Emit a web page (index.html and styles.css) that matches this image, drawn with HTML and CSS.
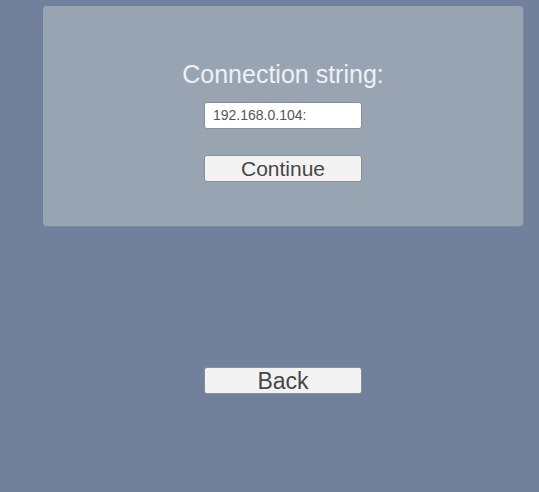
FILE: index.html
```html
<!DOCTYPE html>
<html>
<head>
<meta charset="utf-8">
<link rel="stylesheet" href="styles.css">
</head>
<body>
<div class="screen">
  <div class="panel">
    <div class="title">Connection string:</div>
    <div class="field">192.168.0.104:</div>
    <div class="btn">Continue</div>
  </div>
  <div class="back-row">
    <div class="btn btn-back">Back</div>
  </div>
</div>
</body>
</html>
```
FILE: styles.css
```css
html, body {
  margin: 0;
  padding: 0;
  background: #71819c;
  width: 539px;
  height: 492px;
  overflow: hidden;
  font-family: "Liberation Sans", Arial, sans-serif;
}
.screen {
  padding: 6px 0 0 43px;
}
.panel {
  box-sizing: border-box;
  width: 480px;
  height: 220px;
  background: #99a4b3;
  border-radius: 4px;
  box-shadow: 1px 1px 0 #7d8aa0;
  display: flex;
  flex-direction: column;
  align-items: center;
  padding-top: 55px;
}
.title {
  color: #eef0f3;
  font-size: 25px;
  line-height: 26px;
  height: 26px;
}
.field {
  box-sizing: border-box;
  margin-top: 15px;
  width: 158px;
  height: 27px;
  background: #ffffff;
  border: 1px solid #8a8f96;
  border-radius: 3px;
  color: #555555;
  font-size: 14px;
  line-height: 25px;
  padding-left: 8px;
}
.btn {
  box-sizing: border-box;
  width: 158px;
  height: 27px;
  background: #f3f3f3;
  border: 1px solid #8a8f96;
  border-radius: 3px;
  color: #474747;
  font-size: 21px;
  line-height: 26px;
  text-align: center;
}
.btn-back {
  font-size: 23px;
}
.panel .btn {
  margin-top: 26px;
}
.back-row {
  width: 480px;
  display: flex;
  justify-content: center;
  margin-top: 141px;
}
```
